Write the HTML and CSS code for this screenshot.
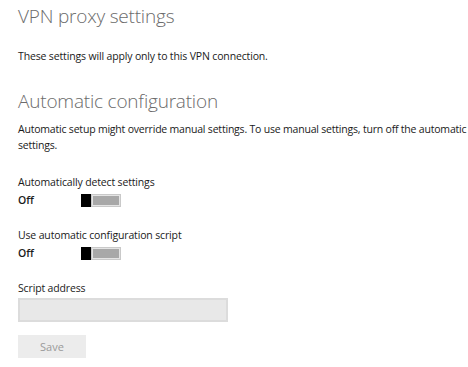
FILE: index.html
```html
<!DOCTYPE html>
<html>
<head>
<meta charset="utf-8">
<link rel="stylesheet" href="styles.css">
</head>
<body>
<main class="page">
  <h1 class="title">VPN proxy settings</h1>
  <p class="text intro">These settings will apply only to this VPN connection.</p>
  <h2 class="title section">Automatic configuration</h2>
  <p class="text desc">Automatic setup might override manual settings. To use manual settings, turn off the automatic settings.</p>
  <div class="setting">
    <div class="label">Automatically detect settings</div>
    <div class="toggle-row"><span class="state">Off</span><span class="toggle"><span class="thumb"></span><span class="track"></span></span></div>
  </div>
  <div class="setting">
    <div class="label">Use automatic configuration script</div>
    <div class="toggle-row"><span class="state">Off</span><span class="toggle"><span class="thumb"></span><span class="track"></span></span></div>
  </div>
  <div class="setting">
    <div class="label">Script address</div>
    <div class="input"></div>
  </div>
  <button class="save">Save</button>
</main>
</body>
</html>
```
FILE: styles.css
```css
html, body {
  margin: 0;
  padding: 0;
  background: #ffffff;
}
.page {
  padding: 2px 0 0 18px;
  font-family: "Open Sans", "Noto Sans", sans-serif;
  color: #1a1a1a;
}
.title {
  margin: 0;
  font-weight: 300;
  font-size: 19px;
  line-height: 28px;
  color: #6b6b6b;
  letter-spacing: -0.2px;
}
.section {
  margin-top: 23px;
}
.text {
  margin: 0;
  font-size: 10.5px;
  line-height: 16px;
  letter-spacing: -0.15px;
}
.intro {
  margin-top: 18px;
}
.desc {
  margin-top: 6px;
  margin-bottom: 21px;
  letter-spacing: -0.2px;
}
.setting {
  margin-top: 17px;
}
.label {
  font-size: 10.5px;
  line-height: 16px;
  letter-spacing: -0.15px;
}
.toggle-row {
  display: flex;
  align-items: center;
  height: 20px;
}
.state {
  width: 63px;
  font-size: 10.5px;
  font-weight: 600;
}
.toggle {
  display: flex;
  width: 40px;
  height: 13px;
  box-sizing: border-box;
}
.thumb {
  width: 10px;
  background: #000000;
}
.track {
  flex: 1;
  background: #a8a8a8;
  border: 1px solid #c9c9c9;
  box-shadow: inset 0 0 0 1px #e4e4e4;
}
.input {
  margin-top: 2px;
  width: 210px;
  height: 24px;
  box-sizing: border-box;
  background: #e8e8e8;
  border: 2px solid #dcdcdc;
}
.save {
  display: block;
  margin-top: 13px;
  width: 68px;
  height: 23px;
  border: none;
  background: #ececec;
  color: #9a9a9a;
  font-family: "Open Sans", "Noto Sans", sans-serif;
  font-size: 11px;
  padding: 0;
}
```
